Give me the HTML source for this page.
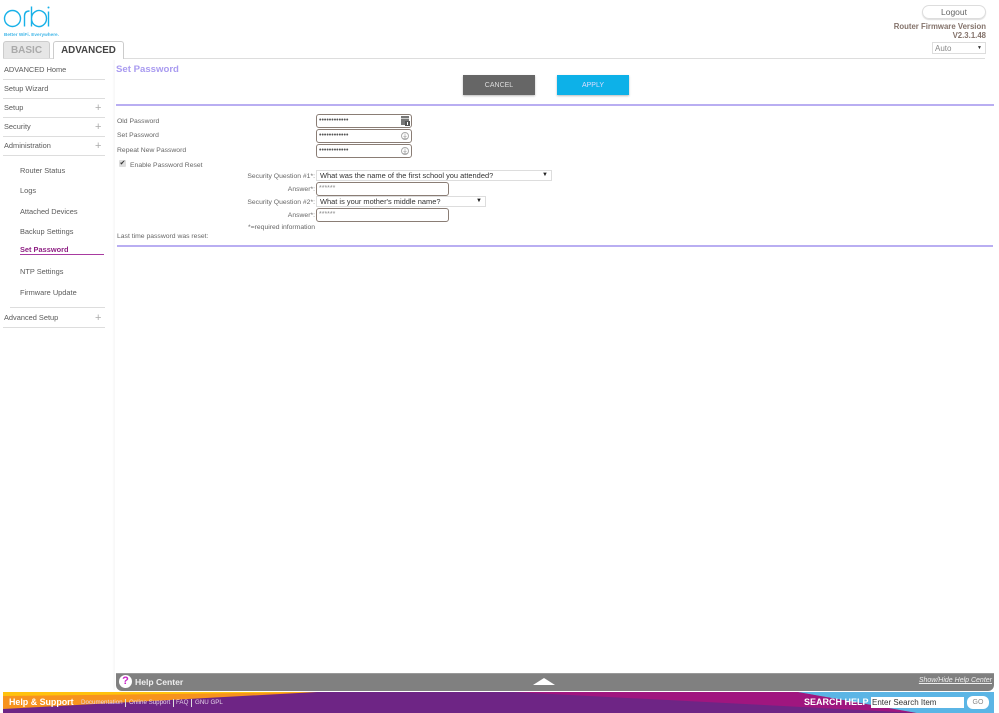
<!DOCTYPE html>
<html><head><meta charset="utf-8"><style>
html,body{margin:0;padding:0;background:#fff}
body{width:999px;height:713px;overflow:hidden;position:relative;font-family:"Liberation Sans",sans-serif;font-size:7px;color:#555}
#w{position:absolute;left:0;top:0;width:999px;height:713px;filter:blur(.3px)}
.a,.t{position:absolute}
.t{white-space:nowrap;font-size:6.8px;line-height:10px;color:#666}
.r{text-align:right;width:150px}
.n{position:absolute;white-space:nowrap;font-size:7.4px;line-height:10px;color:#5a5a5a}
.l{position:absolute;left:3px;width:102px;height:1px;background:#ddd}
.p{position:absolute;left:95px;color:#aaa;font-size:11px;line-height:10px;font-weight:normal}
.i{position:absolute;box-sizing:border-box;background:#fff;border:1px solid #8a7d75;border-radius:3px;font-size:7px;color:#555;line-height:11px;padding-left:2px}
.s{position:absolute;box-sizing:border-box;background:#fff;border:1px solid #ddd;font-size:7.45px;color:#333;line-height:9px;padding-left:3px;white-space:nowrap}
.s b{position:absolute;right:3px;top:0;font-size:6px;color:#222;font-weight:normal}
</style></head><body><div id="w">
<svg class="a" style="left:0;top:0" width="60" height="40" viewBox="0 0 60 40"><g fill="none" stroke="#18b1e8" stroke-width="1.4"><ellipse cx="12.500" cy="18.500" rx="8" ry="8"/><path d="M24.500 26.500V16q0-5 5-5"/><path d="M31.500 6.500v20M31.500 18.500a7.500 8 0 1 1 0 .1"/><path d="M48.500 11.500v15"/></g><circle cx="48.500" cy="7.500" r="1" fill="#18b1e8"/></svg>
<div class="t" style="left:4px;top:30px;font-size:4.700px;color:#42b7e8;font-weight:bold">Better WiFi. Everywhere.</div>
<div class="a" style="left:3px;top:41px;width:47px;height:17px;box-sizing:border-box;background:#e6e6e6;border:1px solid #ccc;border-bottom:0;border-radius:3px 3px 0 0;text-align:center;font-weight:bold;font-size:10px;line-height:18px;color:#aaa">BASIC</div>
<div class="a" style="left:3px;top:58px;width:982px;height:1px;background:#ddd"></div>
<div class="a" style="left:53px;top:41px;width:71px;height:18px;box-sizing:border-box;background:#fff;border:1px solid #ccc;border-bottom:0;border-radius:3px 3px 0 0;text-align:center;font-weight:bold;font-size:9.800px;line-height:18px;color:#444">ADVANCED</div>
<div class="a" style="left:922px;top:5px;width:64px;height:14px;box-sizing:border-box;border:1px solid #ddd;border-radius:7px;text-align:center;font-size:8.500px;line-height:13px;color:#666;box-shadow:0 1px 1px #ddd">Logout</div>
<div class="t" style="right:13px;top:22px;font-size:7.800px;font-weight:bold;color:#84736b">Router Firmware Version</div>
<div class="t" style="right:13px;top:31px;font-size:7.800px;font-weight:bold;color:#84736b">V2.3.1.48</div>
<div class="a" style="left:932px;top:42px;width:54px;height:12px;box-sizing:border-box;border:1px solid #ddd;font-size:8px;line-height:11px;color:#888;padding-left:2px">Auto<span style="position:absolute;right:3px;top:0;font-size:5px;color:#333">▼</span></div>

<div class="n" style="left:4px;top:65px">ADVANCED Home</div><div class="l" style="top:79px"></div>
<div class="n" style="left:4px;top:84px">Setup Wizard</div><div class="l" style="top:98px"></div>
<div class="n" style="left:4px;top:103px">Setup</div><div class="p" style="top:103px">+</div><div class="l" style="top:117px"></div>
<div class="n" style="left:4px;top:122px">Security</div><div class="p" style="top:122px">+</div><div class="l" style="top:136px"></div>
<div class="n" style="left:4px;top:141px">Administration</div><div class="p" style="top:141px">+</div><div class="l" style="top:155px"></div>
<div class="n" style="left:20px;top:166px">Router Status</div>
<div class="n" style="left:20px;top:186px">Logs</div>
<div class="n" style="left:20px;top:207px">Attached Devices</div>
<div class="n" style="left:20px;top:227px">Backup Settings</div>
<div class="n" style="left:20px;top:245px;font-weight:bold;color:#8e1f83">Set Password</div>
<div class="a" style="left:20px;top:254px;width:84px;height:1px;background:#a83aa0"></div>
<div class="n" style="left:20px;top:267px">NTP Settings</div>
<div class="n" style="left:20px;top:288px">Firmware Update</div>
<div class="l" style="top:307px;left:10px;width:95px"></div>
<div class="n" style="left:4px;top:313px">Advanced Setup</div><div class="p" style="top:313px">+</div><div class="l" style="top:327px"></div>

<div class="a" style="left:112px;top:60px;width:3px;height:630px;background:linear-gradient(90deg,#fff,#f6f6f6)"></div>
<div class="t" style="left:116px;top:65px;font-size:9.600px;font-weight:bold;color:#a99bf0">Set Password</div>
<div class="a" style="left:463px;top:75px;width:72px;height:20px;background:#666;text-align:center;line-height:21px;font-size:7px;color:#ddd;box-shadow:0 1px 2px #bbb">CANCEL</div>
<div class="a" style="left:557px;top:75px;width:72px;height:20px;background:#0db1e8;text-align:center;line-height:21px;font-size:7px;color:#ddf;box-shadow:0 1px 2px #bbb">APPLY</div>
<div class="a" style="left:116px;top:104px;width:878px;height:2px;background:#b9aef2"></div>

<div class="t" style="left:117px;top:117px">Old Password</div>
<div class="t" style="left:117px;top:131px">Set Password</div>
<div class="t" style="left:117px;top:146px">Repeat New Password</div>
<div class="i" style="left:316px;top:114px;width:96px;height:14px">••••••••••••</div>
<div class="i" style="left:316px;top:129px;width:96px;height:14px">••••••••••••</div>
<div class="i" style="left:316px;top:144px;width:96px;height:14px">••••••••••••</div>
<svg class="a" style="left:400px;top:115px" width="11" height="12" viewBox="0 0 11 12"><rect x="1" y="1" width="8" height="9" fill="#777"/><rect x="1" y="3" width="8" height="1" fill="#ccc"/><rect x="5" y="6" width="5" height="5" fill="#555"/><rect x="7" y="7" width="1" height="3" fill="#fff"/></svg>
<svg class="a" style="left:400px;top:130px" width="10" height="12" viewBox="0 0 10 12"><circle cx="5" cy="6" r="3.500" fill="none" stroke="#aaa"/><path d="M5 3.500v4M3.500 6l1.500 1.500L6.500 6M3 8.500h4" fill="none" stroke="#aaa" stroke-width=".7"/></svg>
<svg class="a" style="left:400px;top:145px" width="10" height="12" viewBox="0 0 10 12"><circle cx="5" cy="6" r="3.500" fill="none" stroke="#aaa"/><path d="M5 3.500v4M3.500 6l1.500 1.500L6.500 6M3 8.500h4" fill="none" stroke="#aaa" stroke-width=".7"/></svg>

<div class="a" style="left:119px;top:160px;width:7px;height:7px;background:#ddd;border-radius:1px;font-size:7px;line-height:7px;color:#333;text-align:center">✔</div>
<div class="t" style="left:130px;top:161px">Enable Password Reset</div>
<div class="t r" style="left:165px;top:172px">Security Question #1*:</div>
<div class="s" style="left:316px;top:170px;width:236px;height:11px">What was the name of the first school you attended?<b>▼</b></div>
<div class="t r" style="left:165px;top:185px">Answer*:</div>
<div class="i" style="left:316px;top:182px;width:133px;height:14px;line-height:12px;color:#888">******</div>
<div class="t r" style="left:165px;top:198px">Security Question #2*:</div>
<div class="s" style="left:316px;top:196px;width:170px;height:11px">What is your mother's middle name?<b>▼</b></div>
<div class="t r" style="left:165px;top:211px">Answer*:</div>
<div class="i" style="left:316px;top:208px;width:133px;height:14px;line-height:12px;color:#888">******</div>
<div class="t" style="left:248px;top:223px">*=required information</div>
<div class="t" style="left:117px;top:232px">Last time password was reset:</div>
<div class="a" style="left:117px;top:245px;width:876px;height:2px;background:#b9aef2"></div>

<div class="a" style="left:116px;top:673px;width:878px;height:17.500px;background:#808080;border-radius:0 0 6px 6px;border-top:1px solid #999;box-sizing:border-box"></div>
<div class="a" style="left:119px;top:675px;width:13px;height:13px;border-radius:50%;background:#fff;color:#c922c9;font-weight:bold;font-size:11px;line-height:13px;text-align:center">?</div>
<div class="t" style="left:135px;top:677px;font-size:8.600px;font-weight:bold;color:#eee">Help Center</div>
<div class="a" style="left:533px;top:678px;width:0;height:0;border-left:11px solid transparent;border-right:11px solid transparent;border-bottom:7px solid #fff"></div>
<div class="t" style="right:7px;top:676px;font-size:7px;font-style:italic;color:#eee;text-decoration:underline">Show/Hide Help Center</div>

<svg class="a" style="left:3px;top:692px" width="991" height="21" viewBox="0 0 991 21">
<rect width="991" height="21" fill="#f7931e"/>
<path d="M0 0H330L0 4z" fill="#ffc20e"/>
<path d="M0 17L314 0H795L914 21H0z" fill="#6e2585"/>
<path d="M510 0H795L914 21z" fill="#a0167f"/>
<path d="M795 0H991V21H914z" fill="#5bb5e5"/>
</svg>
<div class="t" style="left:9px;top:697px;font-size:8.900px;font-weight:bold;color:#fff">Help &amp; Support</div>
<div class="t" style="left:81px;top:698px;font-size:6.200px;color:#e4d4e8">Documentation</div>
<div class="a" style="left:125px;top:699px;width:1px;height:8px;background:#ddd"></div>
<div class="t" style="left:129px;top:698px;font-size:6.200px;color:#e4d4e8">Online Support</div>
<div class="a" style="left:173px;top:699px;width:1px;height:8px;background:#ddd"></div>
<div class="t" style="left:176px;top:698px;font-size:6.200px;color:#e4d4e8">FAQ</div>
<div class="a" style="left:191px;top:699px;width:1px;height:8px;background:#ddd"></div>
<div class="t" style="left:195px;top:698px;font-size:6.200px;color:#e4d4e8">GNU GPL</div>
<div class="t" style="left:804px;top:697px;font-size:9px;font-weight:bold;color:#fff">SEARCH HELP</div>
<div class="a" style="left:871px;top:697px;width:93px;height:11px;background:#fff;font-size:8px;line-height:11px;color:#333;padding-left:1px;box-sizing:border-box">Enter Search Item</div>
<div class="a" style="left:967px;top:696px;width:22px;height:13px;background:#fff;border-radius:6px;font-size:7px;line-height:13px;text-align:center;color:#888">GO</div>
</div></body></html>
